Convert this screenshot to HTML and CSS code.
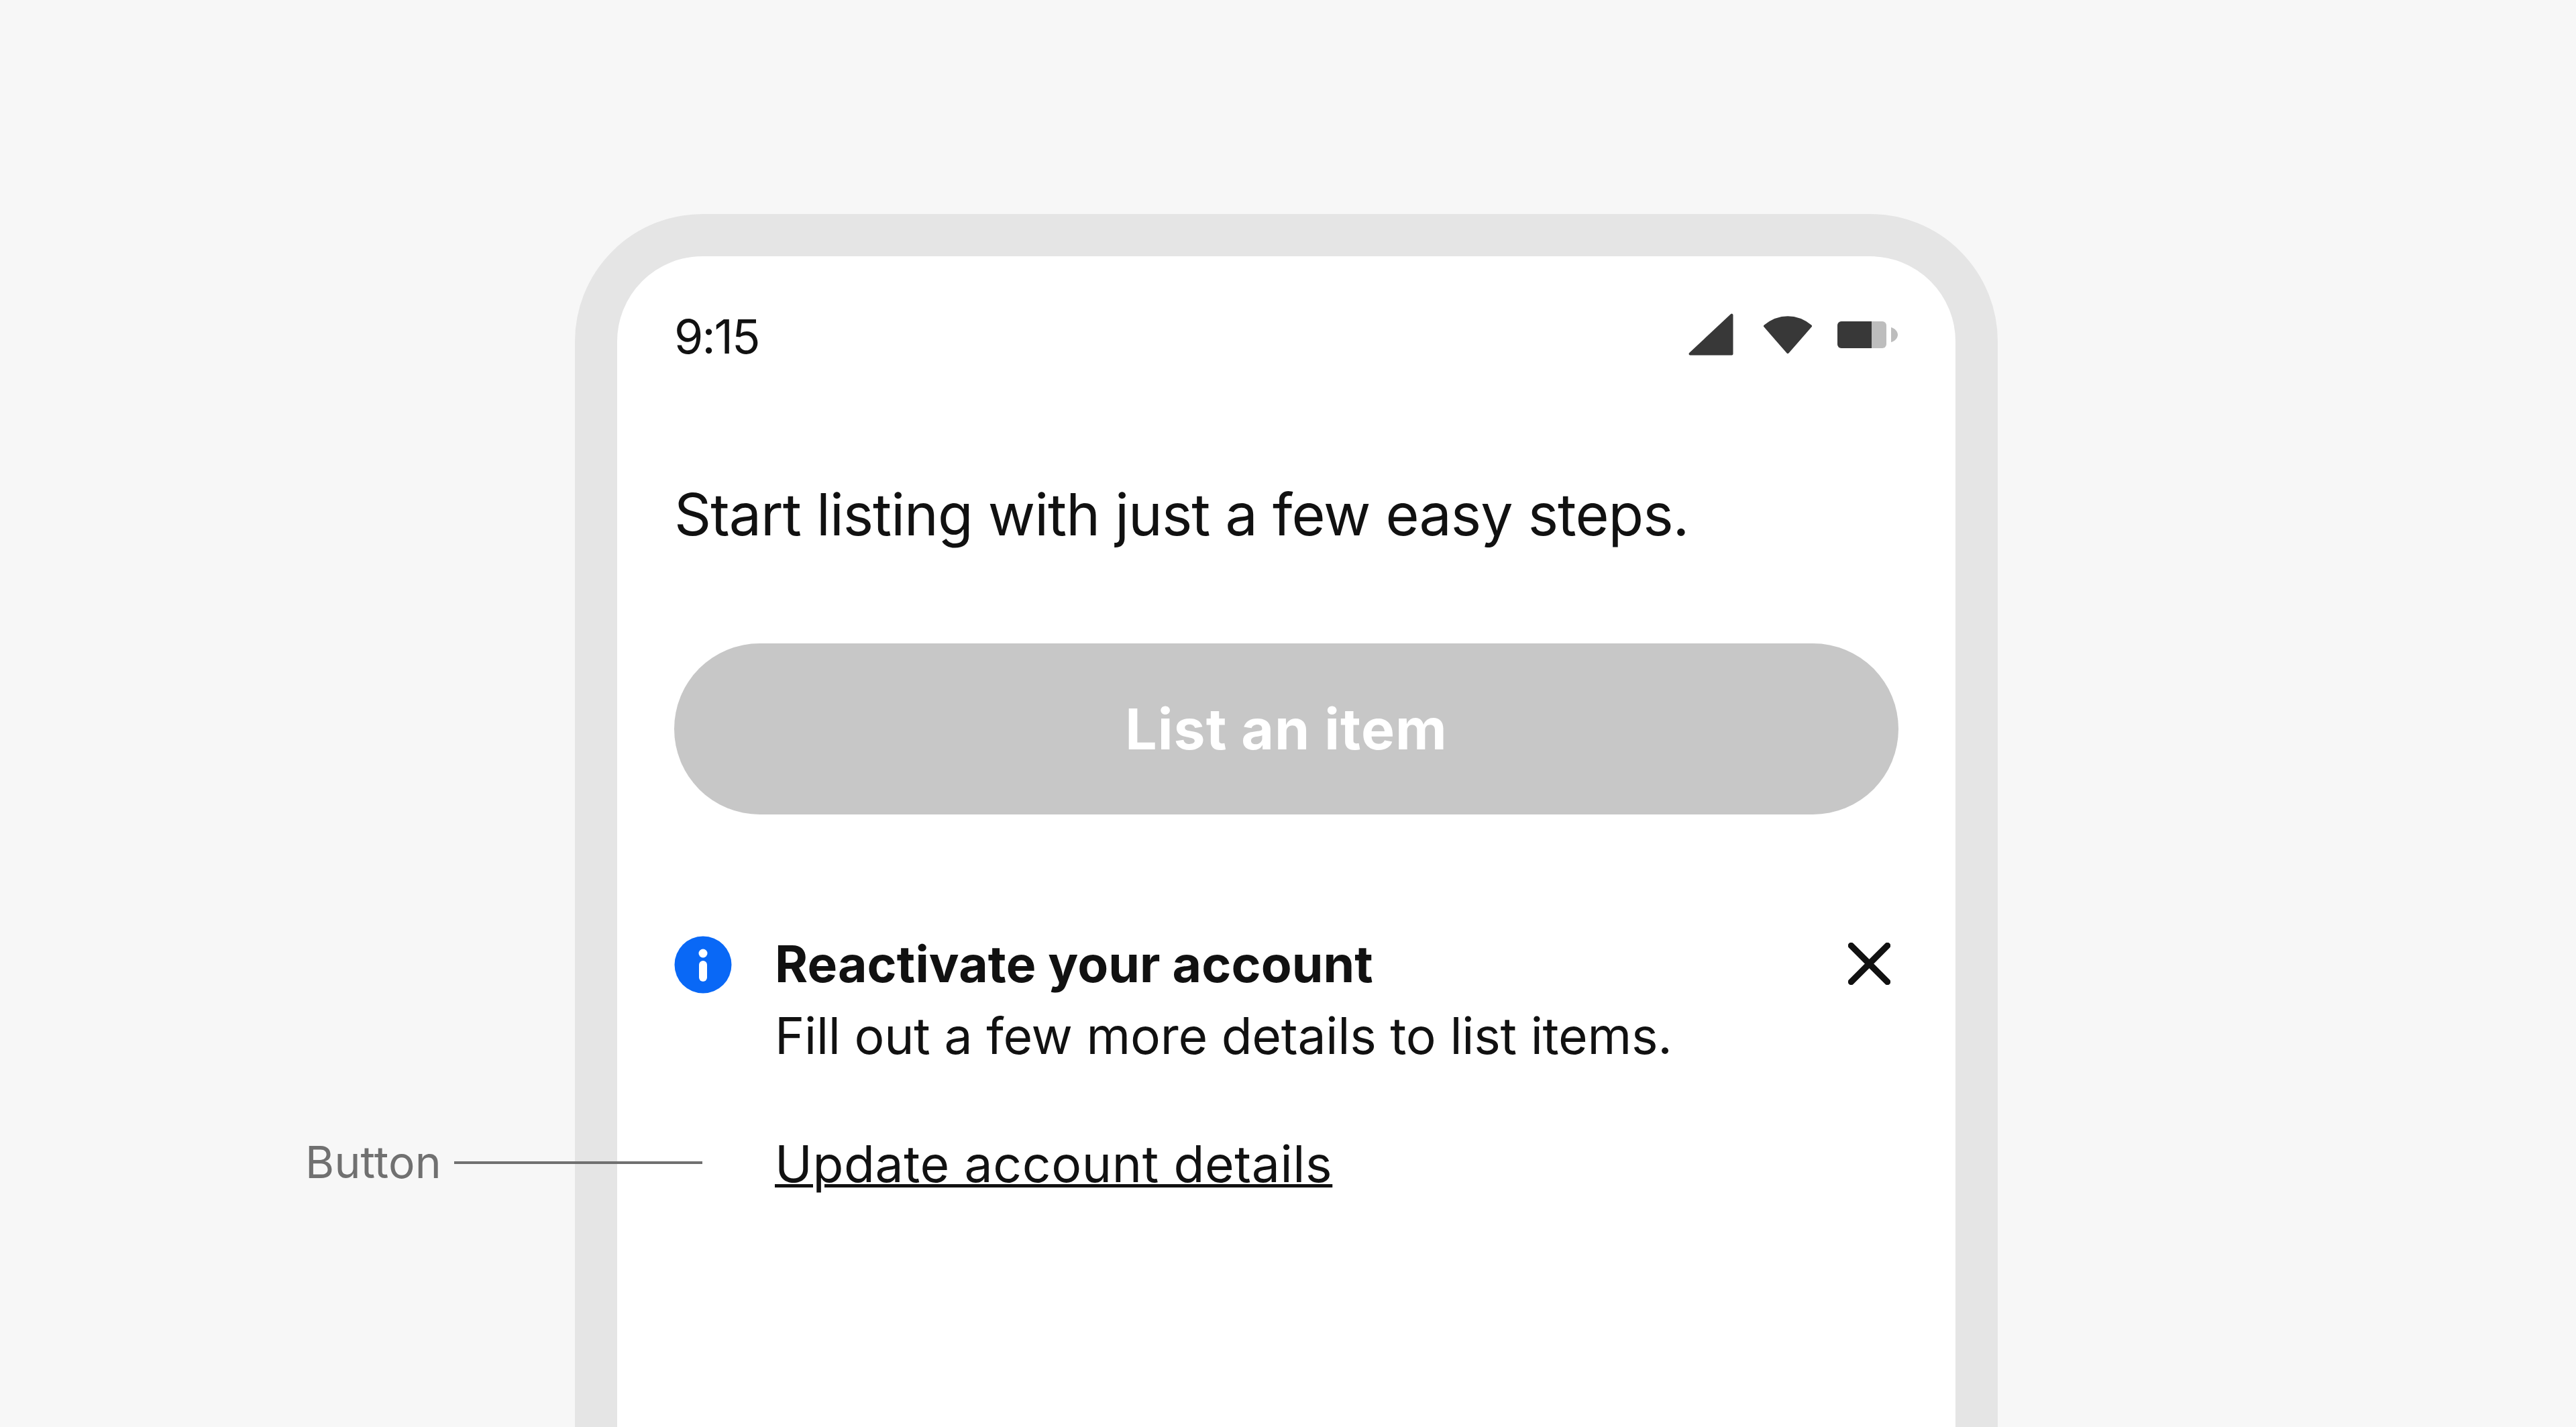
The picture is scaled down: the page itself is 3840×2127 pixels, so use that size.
FILE: index.html
```html
<!DOCTYPE html>
<html lang="en">
<head>
    <meta charset="UTF-8">
    <title>Alert with button</title>
    <link rel="stylesheet" href="styles.css">
</head>
<body>
    <div class="stage">
        <div class="phone">
            <div class="status-bar">
                <span class="time">9:15</span>
                <div class="status-icons">
                    <svg class="icon-signal" width="67" height="63" viewBox="0 0 67 63"><path d="M64.5 2.5V60.5H2.5Z" fill="#383838" stroke="#383838" stroke-width="4" stroke-linejoin="round"/></svg>
                    <svg class="icon-wifi" width="74" height="58" viewBox="0 0 74 58"><path d="M3 16C24 -1 50 -1 71 16L37 55Z" fill="#383838" stroke="#383838" stroke-width="4" stroke-linejoin="round"/></svg>
                    <svg class="icon-battery" width="90" height="40" viewBox="0 0 90 40"><rect x="0" y="0" width="73" height="40" rx="6" fill="#bdbdbd"/><path d="M0 6a6 6 0 0 1 6-6h45v40H6a6 6 0 0 1-6-6Z" fill="#383838"/><path d="M80 9c5 1 10 6 10 11s-5 10-10 11Z" fill="#bdbdbd"/></svg>
                </div>
            </div>

            <p class="intro">Start listing with just a few easy steps.</p>

            <button class="list-btn">List an item</button>

            <div class="alert">
                <svg class="icon-info" width="86" height="86" viewBox="0 0 86 86"><circle cx="43" cy="43" r="42.5" fill="#0968f6"/><circle cx="43" cy="26" r="6.5" fill="#fff"/><rect x="37" y="37" width="12" height="31" rx="6" fill="#fff"/></svg>
                <div class="alert-body">
                    <div class="alert-title">Reactivate your account</div>
                    <div class="alert-text">Fill out a few more details to list items.</div>
                    <a class="alert-link" href="#">Update account details</a>
                </div>
                <svg class="icon-close" width="63" height="63" viewBox="0 0 63 63"><path d="M4.5 4.5L58.5 58.5M58.5 4.5L4.5 58.5" stroke="#111111" stroke-width="9.5" stroke-linecap="round"/></svg>
            </div>
        </div>

        <!-- callout -->
        <div class="callout">
            <span class="callout-label">Button</span>
            <span class="callout-line"></span>
        </div>
    </div>
</body>
</html>
```

FILE: styles.css
```css
html, body {
    margin: 0;
    padding: 0;
}

body {
    background-color: #f7f7f7;
    font-family: Inter, "Liberation Sans", sans-serif;
    color: #111;
    height: 2127px;
    overflow: hidden;
}

.stage {
    position: relative;
    height: 2127px;
    padding-top: 319px;
    box-sizing: border-box;
    overflow: hidden;
}

.phone {
    width: 2121px;
    height: 2200px;
    box-sizing: border-box;
    margin-left: 857px;
    background-color: #fff;
    border: 63px solid #e5e5e5;
    border-radius: 190px;
    padding: 59px 85px 0;
}

.status-bar {
    display: flex;
    justify-content: space-between;
    align-items: center;
    height: 120px;
}

.time {
    font-size: 70px;
    letter-spacing: -2px;
}

.status-icons {
    display: flex;
    align-items: center;
    margin: 0 1px 5px 0;
}

.icon-wifi {
    margin: 0 37px 0 44px;
}

.intro {
    margin: 151px 0 0;
    font-size: 86px;
    line-height: 110px;
    letter-spacing: -1px;
}

.list-btn {
    display: block;
    width: 100%;
    height: 255px;
    margin-top: 137px;
    border: none;
    border-radius: 128px;
    background-color: #c7c7c7;
    color: #fff;
    font-family: inherit;
    font-size: 84px;
    font-weight: 700;
    letter-spacing: 1px;
}

.alert {
    display: flex;
    align-items: flex-start;
    margin-top: 181px;
}

.icon-info {
    flex-shrink: 0;
}

.alert-body {
    flex: 1;
    margin-left: 64px;
    font-size: 75px;
    letter-spacing: -0.26px;
}

.alert-title {
    font-weight: 700;
    line-height: 84px;
    letter-spacing: 0.1px;
}

.alert-text {
    line-height: 106px;
    margin-top: 12px;
}

.alert-link {
    display: inline-block;
    margin-top: 85px;
    color: #111;
    line-height: 106px;
    letter-spacing: 0.6px;
    text-decoration-thickness: 5px;
}

.icon-close {
    flex-shrink: 0;
    margin-top: 10px;
    margin-right: 12px;
}

.callout {
    position: absolute;
    left: 455px;
    top: 1690px;
    display: flex;
    align-items: center;
    gap: 19px;
}

.callout-label {
    font-size: 66px;
    line-height: 84px;
    color: #707070;
    letter-spacing: 0.2px;
}

.callout-line {
    width: 370px;
    height: 4px;
    margin-top: 2px;
    background-color: #707070;
}
```
